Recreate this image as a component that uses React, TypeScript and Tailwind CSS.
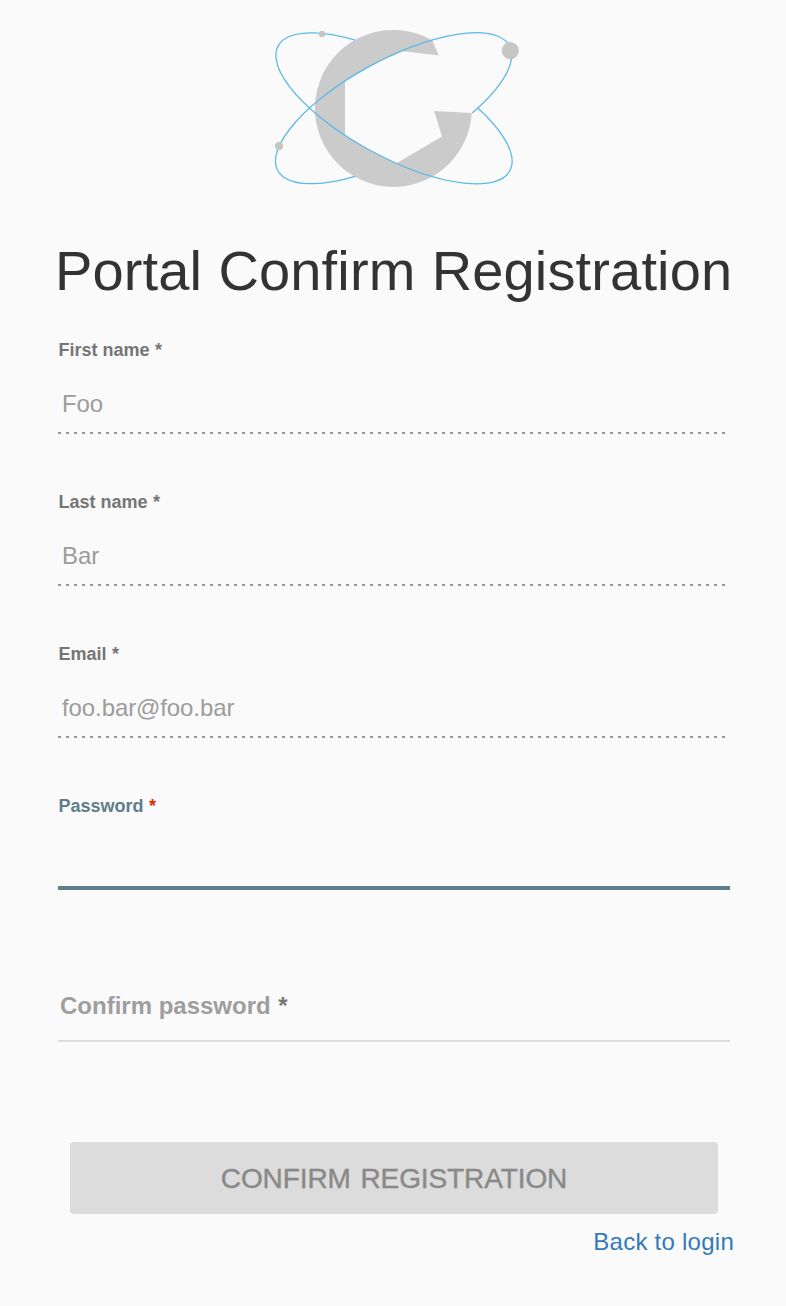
import React from "react";

function Logo() {
  return (
    <svg className="block h-[190px] w-full" viewBox="0 0 786 190" aria-hidden="true">
      <path
        fill="#cbcbcb"
        d="M432.3 40.2 L438.7 55.6 L403 51.2 A131.8 48.5 -28.3 0 0 345 81 V135.6 A131.8 48.5 28.3 0 0 396.5 163.2 L442 136.6 L434.1 111 L471.8 113 A78.5 78.5 0 1 1 432.3 40.2 Z"
      />
      <g fill="none" stroke="#5db9e6" strokeWidth="1.3">
        <path d="M472.2 113.1 A131.6 48.3 -28.3 1 0 355.2 176.3" />
        <path d="M477.5 107.7 A131.6 48.3 28.3 1 1 355.2 40.1" />
      </g>
      <g fill="#c6c6c5">
        <circle cx="322" cy="34" r="3.2" />
        <circle cx="279" cy="146" r="4.2" />
        <circle cx="510.3" cy="50.7" r="8.6" />
      </g>
    </svg>
  );
}

function DisabledField({ id, label, value }: { id: string; label: string; value: string }) {
  return (
    <div className="flex h-[152px] flex-col">
      <label htmlFor={id} className="pl-[0.5px] text-[18px] leading-5 font-bold text-[#757575]">
        {label} <span className="pl-[0.5px]">*</span>
      </label>
      <input
        id={id}
        disabled
        value={value}
        readOnly
        className="mt-7 h-8 w-full bg-transparent pl-1 text-2xl leading-8 tracking-[-0.1px] text-[#9c9c9c]"
      />
      <div className="mt-[12px] h-0.5 w-full bg-[repeating-linear-gradient(to_right,#999_0px,#999_3px,transparent_3px,transparent_8px)]" />
    </div>
  );
}

export default function App() {
  return (
    <main className="h-[1306px] w-[786px] overflow-hidden bg-[#fafafa] font-['Liberation_Sans',Arial,sans-serif]">
      <Logo />
      <h1 className="mt-[49px] pl-[55px] text-[56px] leading-[64px] tracking-[0.15px] [word-spacing:0.5px] whitespace-nowrap text-[#333]">
        Portal Confirm Registration
      </h1>
      <form className="mt-[37px] ml-[58px] w-[672px]">
        <DisabledField id="first" label="First name" value="Foo" />
        <DisabledField id="last" label="Last name" value="Bar" />
        <DisabledField id="email" label="Email" value="foo.bar@foo.bar" />
        <div className="flex h-[196px] flex-col">
          <label htmlFor="password" className="pl-[0.5px] text-[18px] leading-5 font-bold text-[#607d8b]">
            Password <span className="pl-[0.5px] text-[#dd2c00]">*</span>
          </label>
          <input
            id="password"
            type="password"
            className="mt-[26px] h-[48px] w-full border-b-4 border-[#607d8b] bg-transparent pl-1 text-2xl outline-none"
          />
        </div>
        <div className="flex h-[50px] items-start border-b-2 border-[#dcdcdc] pl-0.5 text-2xl leading-7 font-bold text-[#9e9e9e]">
          <label>
            Confirm password <span className="pl-px text-[#757575]">*</span>
          </label>
        </div>
        <button
          type="button"
          disabled
          className="mx-3 mt-[100px] block h-[72px] w-[648px] rounded-[4px] bg-[#dcdcdc] pt-px text-[28px] tracking-[-0.1px] text-[#898989] [-webkit-text-stroke:0.4px_#898989] [word-spacing:2px]"
        >
          CONFIRM REGISTRATION
        </button>
        <div className="mt-[14px] -mr-1 text-right text-2xl leading-7 tracking-[0.25px]">
          <a className="text-[#337ab7]">Back to login</a>
        </div>
      </form>
    </main>
  );
}
